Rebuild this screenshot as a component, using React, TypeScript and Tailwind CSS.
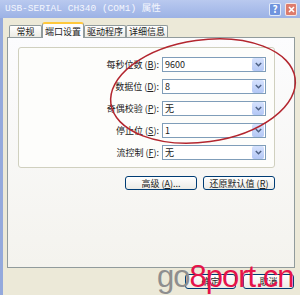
import type { ReactNode } from 'react'

const cjk = "font-['Noto_Sans_CJK_SC','Noto_Sans',sans-serif]"

function Mn({ k }: { k: string }) {
  return (
    <>
      {' ('}
      <span className="underline underline-offset-1">{k}</span>
      {')'}
    </>
  )
}

function Select({ value }: { value: string }) {
  return (
    <div className="flex h-[15px] w-[104px] items-center border border-[#7f9db9] bg-white">
      <span className="flex-1 pl-[2px] text-[9px] leading-none text-[#222]">{value}</span>
      <span className="mr-px flex h-[13px] w-[12px] items-center justify-center rounded-[2px] bg-gradient-to-b from-[#d6e2fd] to-[#b3c7f5]">
        <svg width="7" height="5" viewBox="0 0 7 5">
          <path d="M0.8 1 L3.5 3.7 L6.2 1" fill="none" stroke="#4d6185" strokeWidth="1.5" />
        </svg>
      </span>
    </div>
  )
}

function Row({ label, value }: { label: ReactNode; value: string }) {
  return (
    <div className="flex items-center">
      <div className="w-[143px] pr-[3px] text-right text-[9px] leading-none text-[#222]">{label}</div>
      <Select value={value} />
    </div>
  )
}

function Btn({ children, w }: { children: ReactNode; w: string }) {
  return (
    <div
      className={`flex items-center justify-center rounded-[3px] border border-[#003c74] bg-gradient-to-b from-[#ffffff] to-[#ecebe6] text-[9px] leading-none text-[#222] ${w}`}
    >
      {children}
    </div>
  )
}

export default function App() {
  const tabs = ['常规', '端口设置', '驱动程序', '详细信息']
  return (
    <div className={`relative flex h-[295px] w-[300px] flex-col overflow-hidden bg-[#ece9d8] ${cjk}`}>
      {/* title bar */}
      <div className="flex h-[18px] items-center bg-gradient-to-b from-[#b9c9ef] to-[#9cb2e5] pl-[5px] pr-[3px]">
        <span className="flex-1 font-['Liberation_Mono','Noto_Sans_CJK_SC',monospace] text-[9.5px] leading-none text-[#f4f6fd]">
          USB-SERIAL CH340 (COM1) 属性
        </span>
        <span className="flex h-[13px] w-[12px] items-center justify-center rounded-[2px] border border-white/80 bg-[#7094de] text-[10px] font-bold leading-none text-white">
          ?
        </span>
        <span className="ml-[4px] flex h-[13px] w-[12px] items-center justify-center rounded-[2px] border border-white/80 bg-[#dd7b6c]">
          <svg width="7" height="7" viewBox="0 0 7 7">
            <path d="M1 1 L6 6 M6 1 L1 6" stroke="white" strokeWidth="1.6" />
          </svg>
        </span>
      </div>

      <div className="flex flex-1">
        <div className="w-[3px] bg-[#94a9dc]" />
        <div className="flex flex-1 flex-col pl-[4px] pr-[5px]">
          {/* tabs */}
          <div className="mt-[4px] flex h-[15px] items-end pl-[2px]">
            {tabs.map((t, i) =>
              i === 1 ? (
                <div
                  key={t}
                  className="relative -mb-px flex h-[16px] w-[42px] items-center justify-center rounded-t-[3px] border-x border-t-2 border-x-[#919b9c] border-t-[#ffc83c] bg-[#fcfcfe] text-[9px] leading-none text-[#222]"
                >
                  {t}
                </div>
              ) : (
                <div
                  key={t}
                  className={`flex h-[12px] items-center justify-center rounded-t-[2px] border-x border-t border-[#919b9c] bg-gradient-to-b from-white to-[#ecebe5] text-[9px] leading-none text-[#222] ${i === 0 ? 'w-[33px]' : 'w-[42px]'}`}
                >
                  {t}
                </div>
              )
            )}
          </div>

          {/* tab panel */}
          <div className="h-[231px] border border-[#919b9c] bg-gradient-to-b from-[#fcfcfe] to-[#f4f3ee] pl-[10px] pt-[9px]">
            <div className="flex h-[121px] w-[257px] flex-col gap-[7px] rounded-[3px] border border-[#d0d0bf] bg-[#fdfdfb] pt-[9px]">
              <Row label={<>每秒位数<Mn k="B" />:</>} value="9600" />
              <Row label={<>数据位<Mn k="D" />:</>} value="8" />
              <Row label={<>奇偶校验<Mn k="P" />:</>} value="无" />
              <Row label={<>停止位<Mn k="S" />:</>} value="1" />
              <Row label={<>流控制<Mn k="F" />:</>} value="无" />
            </div>
            <div className="mt-[8px] flex w-[257px] justify-end gap-[6px]">
              <Btn w="h-[14px] w-[72px]">
                高级<Mn k="A" />...
              </Btn>
              <Btn w="h-[14px] w-[72px]">
                还原默认值<Mn k="R" />
              </Btn>
            </div>
          </div>

          {/* bottom buttons */}
          <div className="mt-[6px] flex justify-end gap-[7px] pr-px">
            <Btn w="h-[15px] w-[51px]">确定</Btn>
            <Btn w="h-[15px] w-[51px]">取消</Btn>
          </div>
        </div>
      </div>

      {/* hand-drawn circle */}
      <svg className="pointer-events-none absolute left-0 top-0" width="300" height="295">
        <ellipse
          cx="203"
          cy="91"
          rx="93"
          ry="51"
          transform="rotate(-8 203 91)"
          fill="none"
          stroke="#b3262f"
          strokeWidth="1.5"
        />
      </svg>

      {/* watermark */}
      <div className="pointer-events-none absolute left-[157px] top-[261px] font-['Liberation_Sans',sans-serif] text-[31px] leading-none tracking-[-1px]">
        <span className="text-[#8e8e8e]">go</span>
        <span className="text-[#e5134a]">8port.cn</span>
      </div>
    </div>
  )
}
